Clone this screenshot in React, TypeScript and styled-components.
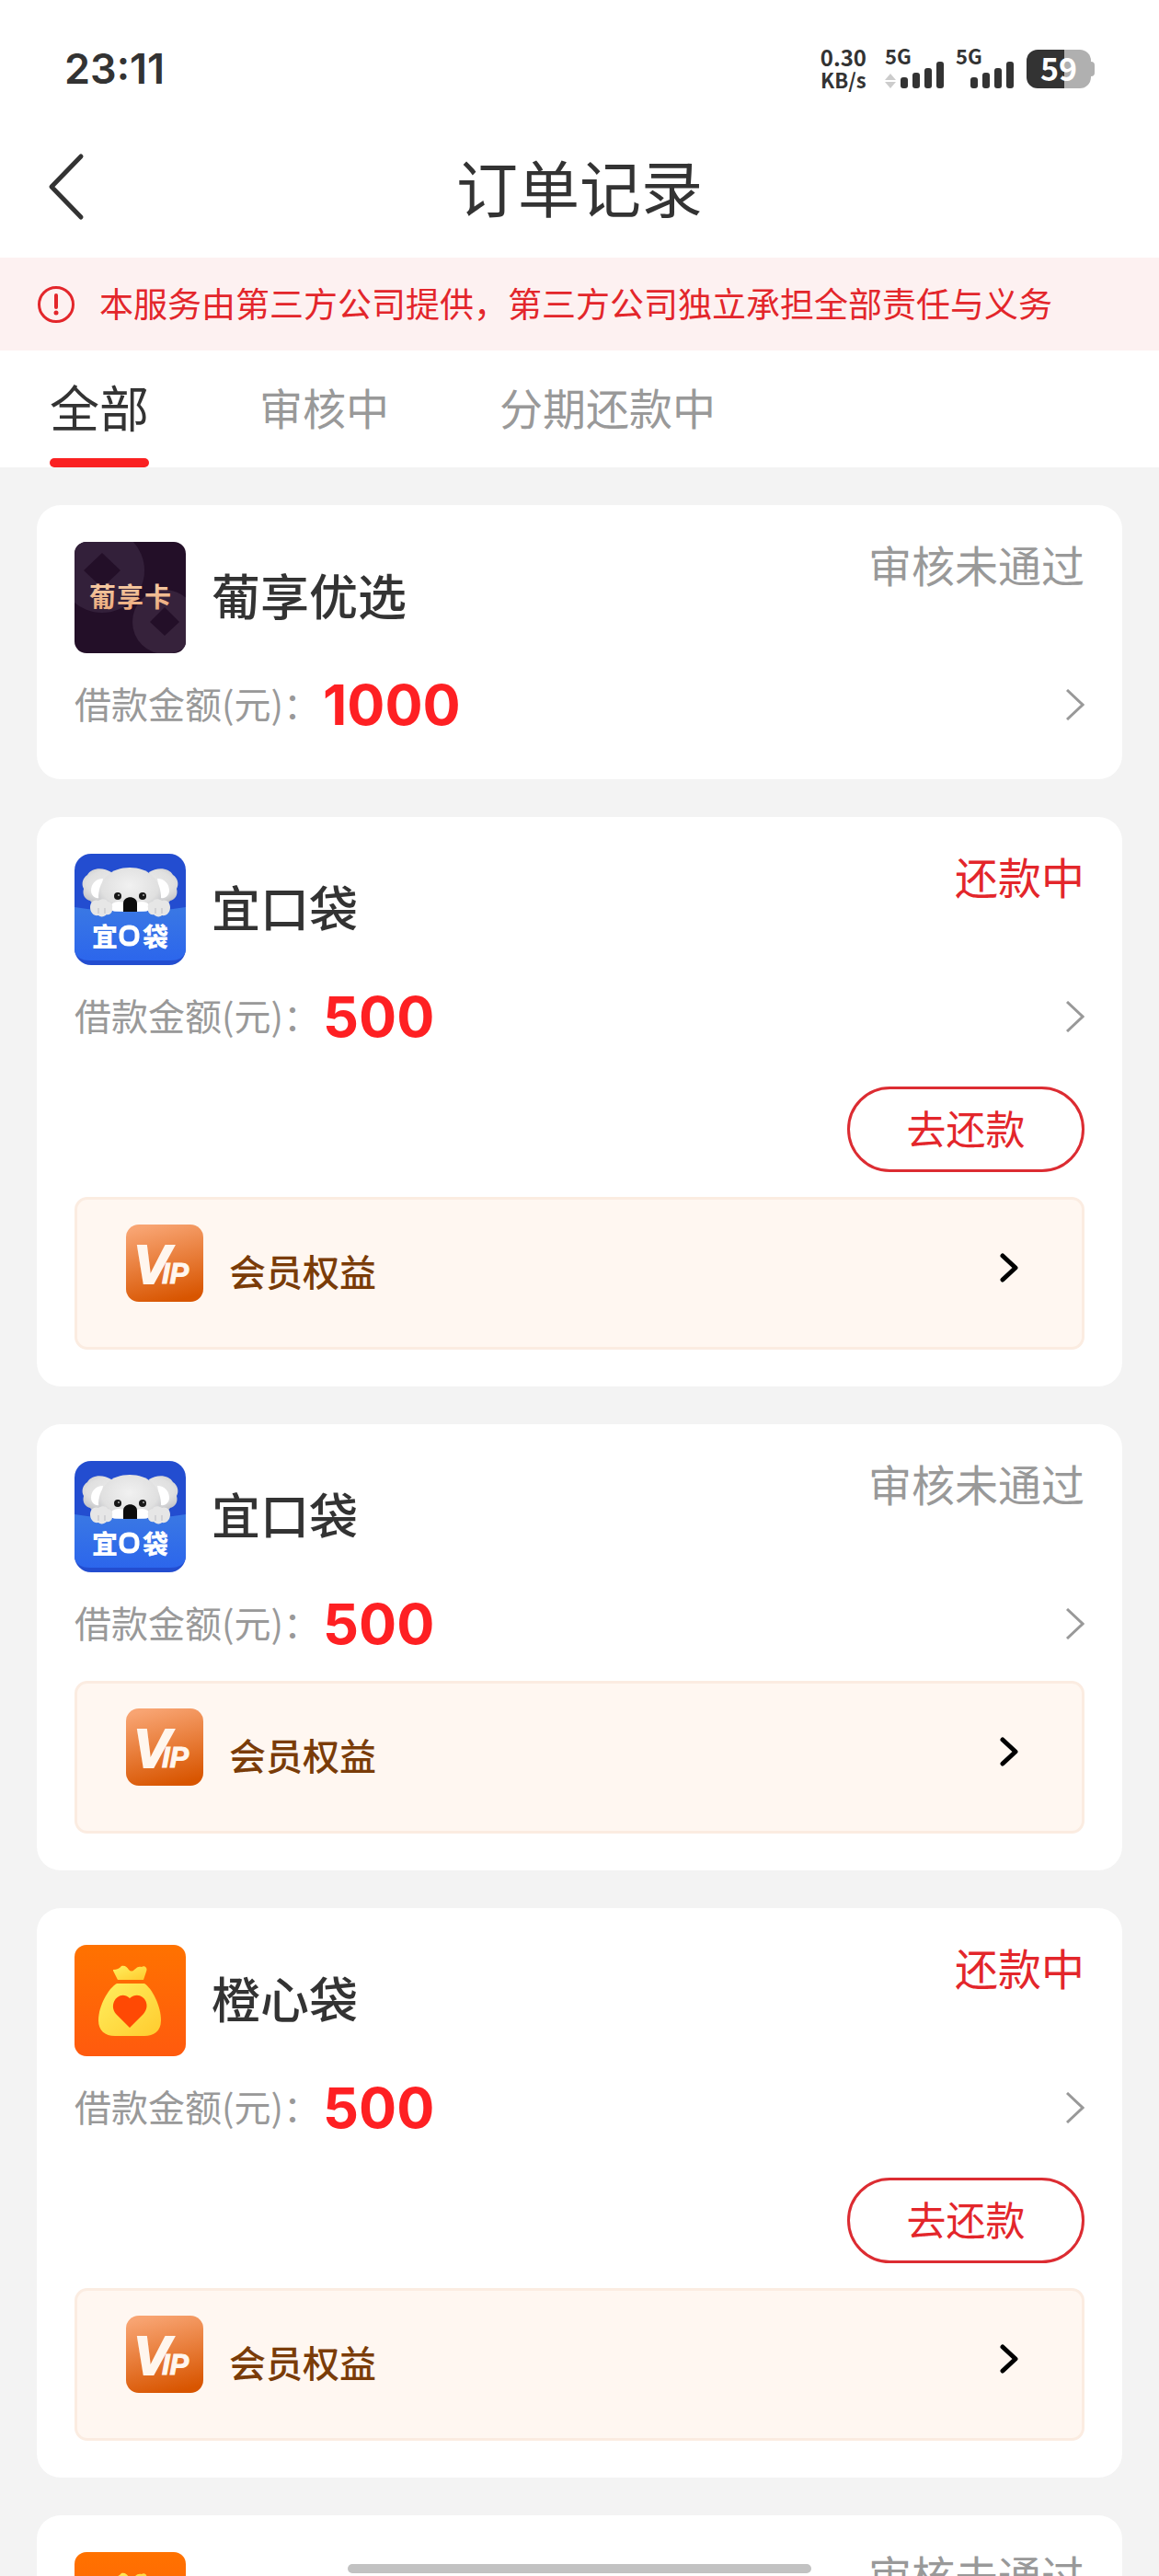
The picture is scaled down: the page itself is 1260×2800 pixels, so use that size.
import React, { useState } from "react";
import styled, { createGlobalStyle } from "styled-components";

const GlobalStyle = createGlobalStyle`
  *, *::before, *::after { box-sizing: border-box; }
  body {
    margin: 0;
    background: #f3f3f3;
    color: #333;
    font-family: "Noto Sans CJK SC", "Noto Sans", sans-serif;
  }
  button { font: inherit; color: inherit; background: none; border: 0; padding: 0; cursor: pointer; }
  h1, h2, p { margin: 0; font-weight: 400; }
  svg { display: block; flex: none; }
`;

const Screen = styled.div`
  display: flex;
  flex-direction: column;
  height: 100vh;
  overflow: hidden;
`;

const StatusBar = styled.div`
  display: flex;
  align-items: center;
  justify-content: space-between;
  height: 150px;
  padding: 0 70px;
  background: #fff;
`;

const Clock = styled.time`
  font-family: Inter, sans-serif;
  font-size: 45px;
  line-height: 50px;
  font-weight: 600;
`;

const Indicators = styled.div`
  display: flex;
  align-items: center;
  gap: 12px;
`;

const NetSpeed = styled.div`
  display: flex;
  flex-direction: column;
  align-items: center;
  margin-right: 8px;
  padding-bottom: 2px;
  font-weight: 700;
  font-size: 24px;
  line-height: 24px;

  small { font-size: 22px; }
`;

const Battery = styled.div`
  display: flex;
  align-items: center;

  &::after {
    content: "";
    width: 4px;
    height: 16px;
    border-radius: 0 4px 4px 0;
    background: #b0b0b0;
  }
`;

const BatteryCell = styled.div`
  width: 70px;
  height: 42px;
  border-radius: 12px;
  background: linear-gradient(90deg, #333 59%, #b0b0b0 59%);
  color: #fff;
  font-size: 34px;
  line-height: 40px;
  font-weight: 700;
  text-align: center;
`;

const Header = styled.header`
  display: grid;
  grid-template-columns: 120px 1fr 120px;
  align-items: center;
  height: 130px;
  padding-bottom: 24px;
  background: #fff;
`;

const BackButton = styled.button`
  justify-self: start;
  padding-left: 50px;
`;

const Title = styled.h1`
  padding-bottom: 3px;
  font-size: 67px;
  line-height: 80px;
  text-align: center;
`;

const Notice = styled.div`
  display: flex;
  align-items: center;
  gap: 26px;
  height: 101px;
  padding: 0 40px;
  background: #fdf1f1;
  color: #e3262b;
  font-size: 37px;
  line-height: 50px;

  p { padding-bottom: 4px; }
`;

const Tabs = styled.nav`
  display: flex;
  gap: 120px;
  height: 127px;
  padding: 0 54px;
  background: #fff;
`;

const Tab = styled.button<{ $active: boolean }>`
  display: flex;
  flex-direction: column;
  justify-content: space-between;
  padding-top: 23px;
  color: ${(p) => (p.$active ? "#333" : "#999")};
  font-size: ${(p) => (p.$active ? 54 : 47)}px;
  line-height: 76px;
  white-space: nowrap;

  &::after {
    content: "";
    width: 100%;
    height: 10px;
    border-radius: 5px;
    background: ${(p) => (p.$active ? "#fa2122" : "transparent")};
  }
`;

const OrderList = styled.main`
  display: flex;
  flex: 1;
  flex-direction: column;
  gap: 41px;
  min-height: 0;
  padding: 41px 40px;
  overflow-y: auto;
  scrollbar-width: none;
`;

const Card = styled.article`
  flex: none;
  padding: 40px 41px;
  border-radius: 26px;
  background: #fff;
`;

const CardHead = styled.div`
  display: flex;
  align-items: center;
  gap: 28px;
`;

const Name = styled.h2`
  flex: 1;
  padding-bottom: 8px;
  font-size: 53px;
  line-height: 72px;
  font-weight: 500;
`;

const Status = styled.span<{ $due: boolean }>`
  align-self: flex-start;
  color: ${(p) => (p.$due ? "#e3262b" : "#999")};
  font-size: 47px;
  line-height: 47px;
`;

const AmountRow = styled.div`
  display: flex;
  align-items: center;
  height: 82px;
  margin-top: 15px;
`;

const AmountLabel = styled.span`
  padding-bottom: 4px;
  color: #999;
  font-size: 40px;
  line-height: 58px;
`;

const Amount = styled.strong`
  flex: 1;
  padding-left: 3px;
  color: #fe2023;
  font-family: Inter, sans-serif;
  font-size: 61px;
  line-height: 82px;
  font-weight: 700;
`;

const Actions = styled.div`
  display: flex;
  justify-content: flex-end;
  margin: 35px 0 27px;
`;

const RepayButton = styled.button`
  width: 258px;
  height: 93px;
  padding-bottom: 6px;
  border: 3px solid #dc2c32;
  border-radius: 47px;
  color: #e3262b;
  font-size: 43px;
  line-height: 60px;
`;

const VipLink = styled.a`
  display: flex;
  align-items: flex-end;
  gap: 28px;
  height: 166px;
  margin-top: 21px;
  padding: 0 69px 49px 53px;
  border: 3px solid #fbece1;
  border-radius: 14px;
  background: #fff7f1;
  color: #7a3c08;
  font-size: 40px;
  line-height: 68px;
  font-weight: 500;
  text-decoration: none;
`;

const VipLabel = styled.span`
  flex: 1;
`;

const HomeIndicator = styled.div`
  position: fixed;
  bottom: 3px;
  left: 30%;
  width: 40%;
  height: 10px;
  border-radius: 5px;
  background: #c2c2c2;
`;

function Signal({ arrows = false }: { arrows?: boolean }) {
  const shift = arrows ? 0 : 1;
  return (
    <svg width="65" height="64" viewBox="0 -10 65 64" role="img" aria-label="5G">
      <text x="0" y="17" fontSize="22" fontWeight="700" fill="#333">5G</text>
      {arrows && <path d="M6 27l6 7H0zM6 43l6-7H0z" fill="#ccc" />}
      <g fill="#333">
        <rect x={17 - shift} y="31" width="8" height="12" rx="3" />
        <rect x={30 - shift} y="26" width="8" height="17" rx="3" />
        <rect x={43 - shift} y="21" width="8" height="22" rx="3" />
        <rect x={56 - shift} y="14" width="8" height="29" rx="3" />
      </g>
    </svg>
  );
}

function PuxiangLogo() {
  return (
    <svg width="121" height="121" viewBox="0 0 121 121">
      <defs>
        <clipPath id="px-clip"><rect width="121" height="121" rx="13" /></clipPath>
        <linearGradient id="px-gold" x1="0" y1="0" x2="0" y2="1">
          <stop offset="0" stopColor="#f8d3ae" />
          <stop offset="1" stopColor="#e9a475" />
        </linearGradient>
      </defs>
      <g clipPath="url(#px-clip)">
        <rect width="121" height="121" fill="#230f28" />
        <circle cx="30" cy="31" r="46" fill="#33203a" />
        <path d="M30 12l20 19-20 19-20-19z" fill="#230f28" />
        <circle cx="98" cy="87" r="35" fill="#36223b" />
        <path d="M98 71l16 16-16 15-16-15z" fill="#230f28" />
        <text x="16 46 76" y="71" fontSize="29" fontWeight="700" fill="url(#px-gold)">葡享卡</text>
      </g>
    </svg>
  );
}

function KoalaLogo() {
  return (
    <svg width="121" height="121" viewBox="0 0 121 121">
      <defs>
        <clipPath id="ko-clip"><rect width="121" height="121" rx="18" /></clipPath>
        <clipPath id="ko-head"><rect width="121" height="63" /></clipPath>
        <radialGradient id="ko-fur" cx="0.5" cy="0.4" r="0.65">
          <stop offset="0" stopColor="#f1f1f1" />
          <stop offset="0.7" stopColor="#e0e0e0" />
          <stop offset="1" stopColor="#bfc0c4" />
        </radialGradient>
        <linearGradient id="ko-pocket" x1="0" y1="0" x2="0" y2="1">
          <stop offset="0" stopColor="#3a78e4" />
          <stop offset="1" stopColor="#2c66ec" />
        </linearGradient>
      </defs>
      <g clipPath="url(#ko-clip)">
        <rect width="121" height="121" fill="#234dd0" />
        <g clipPath="url(#ko-head)">
          <path d="M40 20C31 14 18 15 14 23c-5 3-7 10-4 15-2 7 2 12 7 13 3 5 12 7 18 5zM81 20c9-6 22-5 26 3 5 3 7 10 4 15 2 7-2 12-7 13-3 5-12 7-18 5z" fill="url(#ko-fur)" />
          <path d="M31 27c-8 0-13 6-13 13 0 5 4 9 9 8zM90 27c8 0 13 6 13 13 0 5-4 9-9 8z" fill="#fff" />
          <path d="M60 15c20 0 33 12 34 31 0 11-12 18-34 18S26 57 26 46c1-19 14-31 34-31z" fill="url(#ko-fur)" />
          <ellipse cx="48" cy="58" rx="9" ry="6" fill="#fff" />
          <ellipse cx="73" cy="58" rx="9" ry="6" fill="#fff" />
        </g>
        <circle cx="47" cy="46" r="4" fill="#171717" />
        <circle cx="74" cy="46" r="4" fill="#171717" />
        <circle cx="48" cy="45" r="1" fill="#aaa" />
        <circle cx="75" cy="45" r="1" fill="#aaa" />
        <path d="M0 58q60 10 121 0v48q-3 10-17 10H17Q3 116 0 106z" fill="url(#ko-pocket)" />
        <path d="M53 63V54c0-9 15-9 15 0v9z" fill="#0c0c0c" />
        <path d="M17 58c0-6 5-9 9-7 4-3 9-2 10 1 4 0 6 4 5 7 1 5-3 8-6 7-3 3-7 3-9 1-5 1-9-3-9-9zM104 58c0-6-5-9-9-7-4-3-9-2-10 1-4 0-6 4-5 7-1 5 3 8 6 7 3 3 7 3 9 1 5 1 9-3 9-9z" fill="#e6e6e6" />
        <path d="M26 59v6M33 59v6M88 59v6M95 59v6" stroke="#bdbdc2" strokeWidth="1" />
        <text x="19" y="101" fontSize="28" fontWeight="900" fill="#fff">宜</text>
        <rect x="51" y="80" width="17" height="18" rx="7" fill="none" stroke="#fff" strokeWidth="5" />
        <text x="74" y="101" fontSize="28" fontWeight="900" fill="#fff">袋</text>
      </g>
    </svg>
  );
}

function BagLogo() {
  return (
    <svg width="121" height="121" viewBox="0 0 121 121">
      <defs>
        <linearGradient id="bag-bg" x1="0" y1="0" x2="0" y2="1">
          <stop offset="0" stopColor="#ff7200" />
          <stop offset="1" stopColor="#ff5a0e" />
        </linearGradient>
        <linearGradient id="bag-gold" x1="0" y1="0" x2="1" y2="1">
          <stop offset="0" stopColor="#ffef5e" />
          <stop offset="1" stopColor="#ffcb2e" />
        </linearGradient>
      </defs>
      <rect width="121" height="121" rx="13" fill="url(#bag-bg)" />
      <path d="M42 27q6 0 9-4c4-1 6 1 8 4q3 3 6 0c3-3 5-4 8-3 3-2 7 1 5 5l-3 9H47l-5-10z" fill="url(#bag-gold)" />
      <path d="M46 42h30c8 5 18 24 18 40 0 12-8 17-18 17H44C33 99 26 93 26 82c0-16 11-35 20-40z" fill="url(#bag-gold)" />
      <path d="M60 90L45 75c-9-11 4-27 15-17 12-10 25 6 15 17z" fill="#ff4904" />
    </svg>
  );
}

function VipIcon() {
  return (
    <svg width="84" height="84" viewBox="0 0 84 84">
      <defs>
        <linearGradient id="vip-bg" x1="0.35" y1="0" x2="0.6" y2="1">
          <stop offset="0" stopColor="#f8a472" />
          <stop offset="1" stopColor="#d85500" />
        </linearGradient>
      </defs>
      <rect width="84" height="84" rx="14" fill="url(#vip-bg)" />
      <text
        x="8"
        y="64"
        fill="#fff6ee"
        stroke="#fff6ee"
        strokeWidth="2"
        fontFamily="Liberation Sans, sans-serif"
        fontSize="60"
        fontWeight="700"
        fontStyle="italic"
      >
        V<tspan x="39" fontSize="31" strokeWidth="1">IP</tspan>
      </text>
    </svg>
  );
}

function RowChevron() {
  return (
    <svg width="20" height="34" viewBox="0 0 20 34" fill="none" stroke="#999" strokeWidth="3">
      <path d="M1 1l17 16L1 33" />
    </svg>
  );
}

function VipChevron() {
  return (
    <svg width="20" height="74" viewBox="0 0 20 74" fill="none" stroke="#000" strokeWidth="5" strokeLinecap="round" strokeLinejoin="round">
      <path d="M3 24l14 13L3 50" />
    </svg>
  );
}

const logos = { puxiang: PuxiangLogo, koala: KoalaLogo, bag: BagLogo };

type Order = {
  id: number;
  logo: keyof typeof logos;
  name: string;
  amount: number;
  repaying: boolean;
  vip: boolean;
};

const orders: Order[] = [
  { id: 1, logo: "puxiang", name: "葡享优选", amount: 1000, repaying: false, vip: false },
  { id: 2, logo: "koala", name: "宜口袋", amount: 500, repaying: true, vip: true },
  { id: 3, logo: "koala", name: "宜口袋", amount: 500, repaying: false, vip: true },
  { id: 4, logo: "bag", name: "橙心袋", amount: 500, repaying: true, vip: true },
  { id: 5, logo: "bag", name: "橙心袋", amount: 500, repaying: false, vip: true },
];

function OrderCard({ order }: { order: Order }) {
  const Logo = logos[order.logo];
  return (
    <Card>
      <CardHead>
        <Logo />
        <Name>{order.name}</Name>
        <Status $due={order.repaying}>{order.repaying ? "还款中" : "审核未通过"}</Status>
      </CardHead>
      <AmountRow>
        <AmountLabel>借款金额(元)：</AmountLabel>
        <Amount>{order.amount}</Amount>
        <RowChevron />
      </AmountRow>
      {order.repaying && (
        <Actions>
          <RepayButton type="button">去还款</RepayButton>
        </Actions>
      )}
      {order.vip && (
        <VipLink href="#vip">
          <VipIcon />
          <VipLabel>会员权益</VipLabel>
          <VipChevron />
        </VipLink>
      )}
    </Card>
  );
}

const tabs = ["全部", "审核中", "分期还款中"];

export default function App() {
  const [active, setActive] = useState(0);
  return (
    <Screen>
      <GlobalStyle />
      <StatusBar>
        <Clock>23:11</Clock>
        <Indicators>
          <NetSpeed>
            <span>0.30</span>
            <small>KB/s</small>
          </NetSpeed>
          <Signal arrows />
          <Signal />
          <Battery>
            <BatteryCell>59</BatteryCell>
          </Battery>
        </Indicators>
      </StatusBar>
      <Header>
        <BackButton type="button" aria-label="返回">
          <svg width="42" height="74" viewBox="0 0 42 74" fill="none" stroke="#333" strokeWidth="5" strokeLinecap="round" strokeLinejoin="round">
            <path d="M38 4L6 37l32 33" />
          </svg>
        </BackButton>
        <Title>订单记录</Title>
      </Header>
      <Notice>
        <svg width="42" height="42" viewBox="0 0 42 42" fill="none" stroke="#e3262b" strokeWidth="3">
          <circle cx="21" cy="21" r="18.5" />
          <path d="M21 11v13" strokeWidth="4" strokeLinecap="round" />
          <circle cx="21" cy="30" r="2.5" fill="#e3262b" stroke="none" />
        </svg>
        <p>本服务由第三方公司提供，第三方公司独立承担全部责任与义务</p>
      </Notice>
      <Tabs>
        {tabs.map((label, i) => (
          <Tab key={label} type="button" $active={i === active} onClick={() => setActive(i)}>
            {label}
          </Tab>
        ))}
      </Tabs>
      <OrderList>
        {orders.map((order) => (
          <OrderCard key={order.id} order={order} />
        ))}
      </OrderList>
      <HomeIndicator />
    </Screen>
  );
}
